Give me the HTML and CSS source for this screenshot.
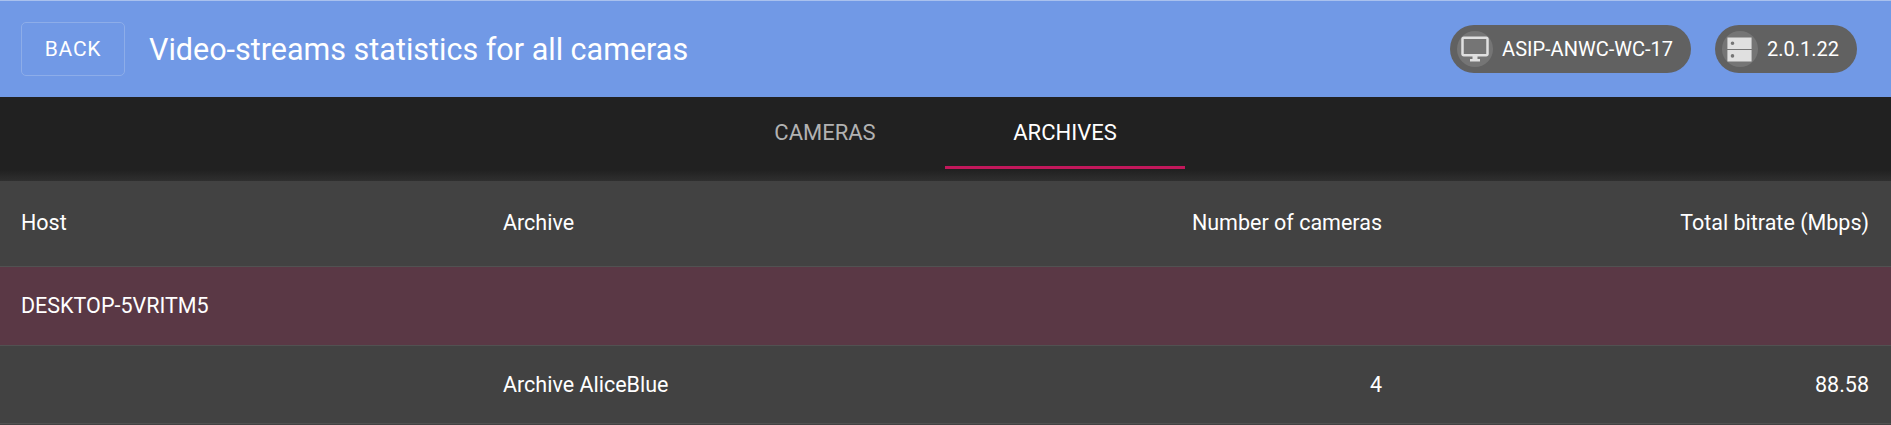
FILE: index.html
```html
<!DOCTYPE html>
<html>
<head>
  <meta charset="UTF-8">
  <title>Video-streams statistics</title>
  <link rel="stylesheet" href="styles.css">
</head>
<body>
  <!-- Top bar -->
  <header class="top-bar">
    <button class="back-button">BACK</button>
    <h1 class="page-title">Video-streams statistics for all cameras</h1>
    <div class="chips">
      <div class="chip">
        <span class="chip-avatar">
          <svg width="30" height="30" viewBox="0 0 24 24" fill="#e0e0e0">
            <path d="M21 2H3c-1.1 0-2 .9-2 2v12c0 1.1.9 2 2 2h7v2H8v2h8v-2h-2v-2h7c1.1 0 2-.9 2-2V4c0-1.1-.9-2-2-2zm0 14H3V4h18v12z"></path>
          </svg>
        </span>
        <span class="chip-label">ASIP-ANWC-WC-17</span>
      </div>
      <div class="chip">
        <span class="chip-avatar">
          <svg width="29" height="29" viewBox="0 0 24 24" fill="#e0e0e0">
            <path d="M2 2h20v9.500H2V2zm4.200 6.300a1.500 1.500 0 1 0 0-3 1.500 1.500 0 0 0 0 3zM2 12.500h20V22H2v-9.500zm4.200 6.300a1.500 1.500 0 1 0 0-3 1.500 1.500 0 0 0 0 3z" fill-rule="evenodd"></path>
          </svg>
        </span>
        <span class="chip-label">2.0.1.22</span>
      </div>
    </div>
  </header>

  <!-- Tabs -->
  <nav class="tabs">
    <div class="tab">CAMERAS</div>
    <div class="tab tab-active">ARCHIVES</div>
  </nav>

  <!-- Statistics table -->
  <table class="stats-table">
    <thead>
      <tr>
        <th class="col-host">Host</th>
        <th class="col-archive">Archive</th>
        <th class="col-count num">Number of cameras</th>
        <th class="col-bitrate num">Total bitrate (Mbps)</th>
      </tr>
    </thead>
    <tbody>
      <tr class="host-row">
        <td>DESKTOP-5VRITM5</td>
        <td></td>
        <td></td>
        <td></td>
      </tr>
      <tr class="archive-row">
        <td></td>
        <td>Archive AliceBlue</td>
        <td class="num">4</td>
        <td class="num">88.58</td>
      </tr>
    </tbody>
  </table>
</body>
</html>
```

FILE: styles.css
```css
html, body {
  margin: 0;
  padding: 0;
  height: 100%;
  overflow: hidden;
}
body {
  background-color: #424242;
  color: #fff;
  font-family: Roboto, sans-serif;
}

/* Top bar */
.top-bar {
  box-sizing: border-box;
  height: 97px;
  display: flex;
  align-items: center;
  padding: 0 34px 0 21px;
  background-color: #7199e6;
  border-top: 1px solid #a9c1ee;
}
.back-button {
  box-sizing: border-box;
  width: 104px;
  height: 54px;
  border: 1px solid #8dade9;
  border-radius: 5px;
  background: none;
  color: #fff;
  font-family: inherit;
  font-size: 21px;
  letter-spacing: 0.7px;
}
.page-title {
  margin: 0 0 0 24px;
  font-size: 30.500px;
  font-weight: 400;
  flex: 1;
}
.chips {
  display: flex;
  gap: 24px;
}
.chip {
  height: 48px;
  display: flex;
  align-items: center;
  padding: 0 18px 0 7px;
  border-radius: 24px;
  background-color: #616161;
}
.chip-avatar {
  width: 36px;
  height: 36px;
  display: flex;
  align-items: center;
  justify-content: center;
  border-radius: 50%;
  background-color: #757575;
}
.chip-label {
  margin-left: 9px;
  font-size: 20px;
}

/* Tabs */
.tabs {
  box-sizing: border-box;
  height: 84px;
  display: flex;
  justify-content: center;
  padding-right: 1px;
  background: linear-gradient(#212121 73px, #2f2f2f);
}
.tab {
  box-sizing: border-box;
  width: 240px;
  height: 72px;
  padding-top: 23px;
  text-align: center;
  font-size: 22px;
  color: #b2b2b2;
  border-bottom: 3px solid transparent;
}
.tab-active {
  color: #fff;
  border-bottom-color: #c2185b;
}

/* Table */
.stats-table {
  width: 1891px;
  border-collapse: collapse;
  table-layout: fixed;
  font-size: 21.500px;
}
.stats-table th,
.stats-table td {
  padding: 0 21px;
  text-align: left;
  font-weight: 400;
  border-bottom: 1px solid #515151;
}
.stats-table th {
  padding-bottom: 2px;
}
.stats-table .num {
  text-align: right;
}
.stats-table th:last-child,
.stats-table td:last-child {
  padding-right: 22px;
}
.col-host { width: 440px; }
.col-archive { width: 418px; }
.col-count { width: 419px; }
.col-bitrate { width: 445px; }
.stats-table thead tr { height: 85px; }
.host-row { height: 79px; background-color: #5a3845; }
.archive-row { height: 78px; }
```
